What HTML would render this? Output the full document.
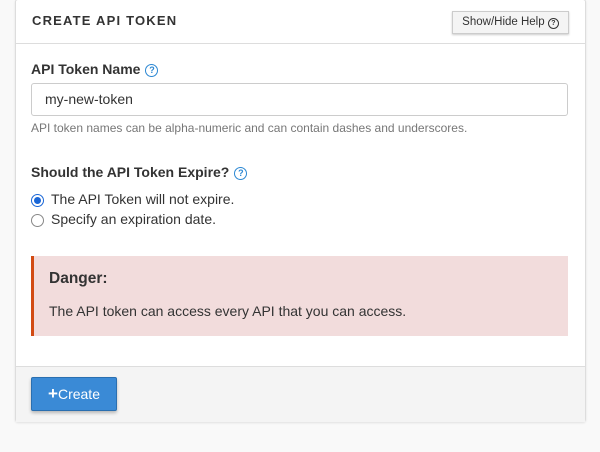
<!DOCTYPE html>
<html><head><style>
body{margin:0;width:600px;height:452px;background:#f9f9f9;font-family:"Liberation Sans",sans-serif;color:#333;position:relative;overflow:hidden}
.panel{position:absolute;left:15px;top:-1px;width:569px;height:421px;background:#fff;border:1px solid #ddd;border-radius:3px;box-shadow:0 1px 2px rgba(0,0,0,.1)}
.abs{position:absolute;white-space:nowrap}
.q{display:inline-block;width:11px;height:11px;border:1.5px solid #2b87d3;border-radius:50%;color:#2b87d3;font-size:9px;line-height:11px;text-align:center;font-weight:bold;vertical-align:1px;margin-left:5px}
.radio{position:absolute;width:11px;height:11px;border:1px solid #888;border-radius:50%;background:#fff}
</style></head><body>
<div class="panel">
<div class="abs" style="left:16px;top:13px;font-size:13px;font-weight:bold;letter-spacing:1.2px;color:#333">CREATE API TOKEN</div>
<div class="abs" style="left:436px;top:11px;width:115px;height:21px;border:1px solid #ccc;background:#f4f4f4;box-shadow:0 1px 2px rgba(0,0,0,.2);font-size:11.5px;line-height:21px;text-align:center;color:#333">Show/Hide Help <span style="display:inline-block;width:9px;height:9px;border:1px solid #333;border-radius:50%;font-size:7px;line-height:9px;font-weight:bold">?</span></div>
<div style="position:absolute;left:0;top:43px;width:569px;border-top:1px solid #ddd"></div>
<div class="abs" style="left:15px;top:61px;font-size:14px;font-weight:bold">API Token Name<span class="q">?</span></div>
<div class="abs" style="left:15px;top:83px;width:522px;height:31px;border:1px solid #ccc;border-radius:3px;font-size:14px;line-height:31px;padding-left:13px;color:#333">my-new-token</div>
<div class="abs" style="left:15px;top:121px;font-size:12px;color:#777">API token names can be alpha-numeric and can contain dashes and underscores.</div>
<div class="abs" style="left:15px;top:164px;font-size:14px;font-weight:bold">Should the API Token Expire?<span class="q">?</span></div>
<div class="radio" style="left:15px;top:194px;border-color:#1a66d6"><div style="position:absolute;left:2px;top:2px;width:7px;height:7px;border-radius:50%;background:#1a66d6"></div></div>
<div class="abs" style="left:35px;top:191px;font-size:14px">The API Token will not expire.</div>
<div class="radio" style="left:15px;top:214px"></div>
<div class="abs" style="left:35px;top:211px;font-size:14px">Specify an expiration date.</div>
<div class="abs" style="left:15px;top:256px;width:534px;height:80px;background:#f2dcdc;border-left:3px solid #d24b13"></div>
<div class="abs" style="left:33px;top:270px;font-size:15.5px;font-weight:bold;color:#333">Danger:</div>
<div class="abs" style="left:33px;top:303px;font-size:14px">The API token can access every API that you can access.</div>
<div style="position:absolute;left:0;top:366px;width:569px;height:55px;background:#f4f4f4;border-top:1px solid #ddd"></div>
<div class="abs" style="left:15px;top:377px;width:84px;height:32px;background:#3a8ad6;border:1px solid #2a6fb0;border-radius:2px;box-shadow:0 2px 3px rgba(0,0,0,.25);color:#fff;font-size:14px;line-height:32px;text-align:center"><b style="font-size:17px">+</b>Create</div>
</div>
</body></html>
